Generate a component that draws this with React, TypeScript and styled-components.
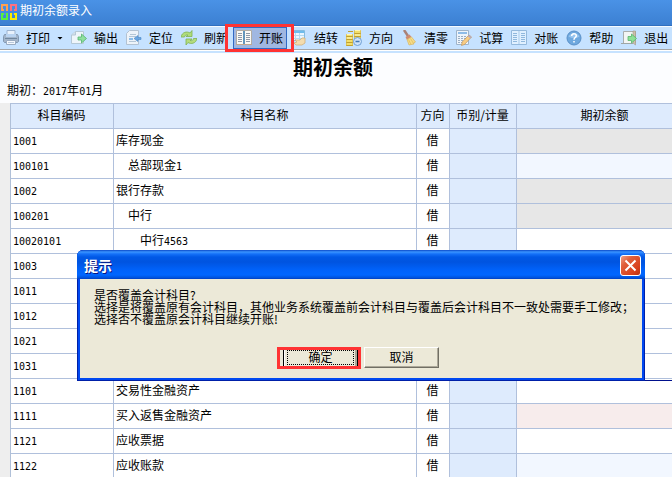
import React from "react";
import styled, { createGlobalStyle } from "styled-components";

const Global = createGlobalStyle`
  *, *::before, *::after { box-sizing: border-box; }
  html, body { margin: 0; height: 100%; overflow: hidden; background: #fcfdff; }
  body, button, table {
    font-family: "Noto Sans CJK SC", "Noto Sans", sans-serif;
    font-size: 12px;
    line-height: 16px;
    color: #000;
  }
`;

const Page = styled.main`
  position: relative;
  overflow: hidden;
  min-height: 100vh;
`;

const TitleBar = styled.header`
  display: flex;
  align-items: flex-start;
  gap: 3px;
  height: 26px;
  padding: 3px 0 0 1px;
  color: #fff;
  background: linear-gradient(#4a92e6, #3c80d2);
  border-bottom: 1px solid #2f6fc0;

  svg { margin-top: 1px; }
`;

const AppName = styled.span`
  line-height: 14px;
`;

const ToolBar = styled.nav`
  display: flex;
  align-items: center;
  height: 24px;
  background: #c6e2ff;
  border-top: 1px solid #f4faff;
  border-bottom: 1px solid #a5a5a5;
`;

const ToolBarEdge = styled.div`
  height: 3px;
  background: #c6e2ff;
  border-top: 1px solid #fff;
`;

const ToolButton = styled.button<{ $active?: boolean }>`
  position: relative;
  display: flex;
  flex: none;
  align-items: center;
  gap: 7px;
  height: 22px;
  margin-right: ${(p) => (p.$active ? 1 : 0)}px;
  padding: 0 ${(p) => (p.$active ? 3 : 4)}px 0 2px;
  border: 1px solid ${(p) => (p.$active ? "#316ac5" : "transparent")};
  background: ${(p) => (p.$active ? "#a0b7e1" : "transparent")};
  white-space: nowrap;
`;

const Arrow = styled.span`
  width: 6px;
  height: 3px;
  background: #000;
  clip-path: polygon(0 0, 100% 0, 50% 100%);
`;

const Highlight = styled.span`
  position: absolute;
  z-index: 1;
  inset: -4px -8px -4px -9px;
  border: 3px solid #ff3333;
  pointer-events: none;
`;

const OkHighlight = styled(Highlight)`
  inset: -1px -4px -2px -7px;
`;

const Heading = styled.h1`
  margin: 0;
  padding: 0 6px 0 0;
  font-size: 20px;
  line-height: 28px;
  text-align: center;
`;

const Period = styled.p`
  margin: 0;
  padding: 1px 7px 5px;
  line-height: 16px;
`;

const Num = styled.span`
  font-family: "DejaVu Sans Mono", monospace;
  font-size: 10px;
  line-height: 12px;
`;

const Sheet = styled.div`
  padding-left: 10px;
  margin-right: -22px;
  background: #eee;
`;

const Grid = styled.table`
  width: 100%;
  table-layout: fixed;
  border-collapse: separate;
  border-spacing: 0;
  border-left: 1px solid #b0c0d8;
  background: #fff;
`;

const Col = styled.col<{ $w?: number }>`
  width: ${(p) => (p.$w ? `${p.$w}px` : "auto")};
`;

const Head = styled.th`
  height: 26px;
  padding: 0 1px 2px 0;
  font-weight: normal;
  background: #deebfd;
  border: 1px solid #b0c0dc;
  border-left: 0;
`;

const Cell = styled.td<{ $level?: number; $center?: boolean; $fill?: string }>`
  height: 25px;
  padding: 0 2px 2px ${(p) => (p.$center ? 1 : 2 + (p.$level ?? 0) * 12)}px;
  text-align: ${(p) => (p.$center ? "center" : "left")};
  background: ${(p) => p.$fill ?? "#fff"};
  border-right: 1px solid #b0c0dc;
  border-bottom: 1px solid #b0c0dc;
  white-space: nowrap;
`;

const FocusLine = styled.div`
  position: absolute;
  top: 380px;
  left: 241px;
  right: 0;
  height: 1px;
  background: #00108c;
`;

const Dialog = styled.section`
  position: absolute;
  top: 250px;
  left: 77px;
  width: 568px;
  padding-bottom: 3px;
  overflow: hidden;
  border-radius: 6px 6px 0 0;
  background: #0048f0;
  box-shadow: inset 0 0 0 1px #0020a8;
`;

const DialogBar = styled.div`
  display: flex;
  align-items: center;
  justify-content: space-between;
  height: 29px;
  padding: 2px 4px 0 7px;
  background: linear-gradient(
    #0a48c8 0, #3a94ff 2px, #1470f8 4px, #0058e6 7px, #0054e0 12px,
    #0062fa 20px, #0066ff 25px, #0050d8 28px, #003cc0 29px
  );
`;

const DialogTitle = styled.h2`
  margin: 0;
  padding-bottom: 2px;
  color: #fff;
  font-size: 14px;
  line-height: 20px;
  text-shadow: 1px 1px #0a1883;
`;

const CloseButton = styled.button`
  display: flex;
  align-items: center;
  justify-content: center;
  width: 21px;
  height: 21px;
  padding: 0;
  border: 1px solid #fff;
  border-radius: 3px;
  background: linear-gradient(135deg, #f0a088 0, #e0603c 30%, #d8401c 75%, #b83010);
`;

const DialogBody = styled.div`
  margin: 0 3px;
  padding: 10px 4px 10px 14px;
  background: #ece9d8;
`;

const Message = styled.p`
  margin: 0;
  line-height: 12px;
  white-space: nowrap;
`;

const Actions = styled.div`
  display: flex;
  gap: 6px;
  padding: 22px 0 0 189px;
`;

const PushButton = styled.button<{ $default?: boolean }>`
  position: relative;
  width: 75px;
  height: 21px;
  padding: 0 0 2px;
  line-height: 16px;
  background: #ece9d8;
  border: 1px solid;
  border-color: #fff #716f64 #716f64 #fff;
  box-shadow: inset -1px -1px #aca899;
  ${(p) =>
    p.$default &&
    `
      border-left-color: #000;
      border-right-color: #000;
      box-shadow: inset 1px 0 #fff, inset -2px -1px #aca899;
      &::before {
        content: "";
        position: absolute;
        inset: 2px 3px;
        border: 1px dotted #000;
      }
    `}
`;

const Svg = ({ children }: { children: React.ReactNode }) => (
  <svg width="16" height="16" viewBox="0 0 16 16" fill="none" aria-hidden="true">
    {children}
  </svg>
);

const LogoIcon = () => (
  <Svg>
    <g strokeWidth="2">
      <path d="M1 1h5v5H1z" stroke="#ffa050" />
      <path d="M10 1h5v5h-5z" stroke="#ff7080" />
      <path d="M1 10h5v5H1z" stroke="#58f03c" />
      <path d="M10 10h5v5h-5z" stroke="#ffee00" />
    </g>
    <path d="M3 5h2v2H3zM11 5h2v2h-2zM3 9h2v2H3zM11 9h2v2h-2z" fill="#4a8ee0" />
  </Svg>
);

const PrintIcon = () => (
  <Svg>
    <path d="M4 .5h8V6H4z" fill="#e8f1fc" stroke="#9db4d0" />
    <path d="M1.500 4.500h13l1 2v5l-1 1h-13l-1-1v-5z" fill="#a3b5ca" stroke="#8298b2" />
    <path d="M3 4h10v3H3z" fill="#b9d3f0" />
    <path d="M2 8.500h12" stroke="#70879f" />
    <path d="M3.500 10.500h9v4h-9z" fill="#f4f8fd" stroke="#9aacc2" />
    <path d="M5 12.500h6" stroke="#b9c8da" />
  </Svg>
);

const ExportIcon = () => (
  <Svg>
    <path d="M4.500 1.500h8v12H.5V5z" fill="#eef5fa" stroke="#b4c8d6" />
    <path d="M4.500 1.500V5H.5" fill="#d3e0ea" stroke="#b4c8d6" />
    <path d="M7 7h3.500V4L15.500 8.500 10.500 13v-3H7z" fill="#8fe0a0" stroke="#55b56e" strokeWidth=".8" />
  </Svg>
);

const LocateIcon = () => (
  <Svg>
    <path d="M3.500.5h9v14h-12V3.500z" fill="#edf3f9" stroke="#b3c2d2" />
    <path d="M4 4.500h6M3 6.500h7M3 11.500h7" stroke="#b4c6d6" />
    <path d="M3 8h4v2H3z" fill="#8bbce8" />
    <path d="M15 7.500h-3V5.500L8 8.500l4 3v-2h3z" fill="#6aa5e0" stroke="#4a88c8" strokeWidth=".6" />
  </Svg>
);

const RefreshIcon = () => (
  <Svg>
    <path d="M0 7c1-5 6-6 9-4l2-2.500V6.500H5L7 5C5 4.500 4 5.500 3.500 7z" fill="#b0dc7a" stroke="#7fb350" strokeWidth=".8" />
    <path d="M16 8.500c-1 5-6 6-9 4l-2 2.500V9h6L9 10.500c2 .5 3 0 3.500-2z" fill="#b5dc7e" stroke="#7fb350" strokeWidth=".8" />
  </Svg>
);

const BookIcon = ({ faded }: { faded?: boolean }) => (
  <Svg>
    <path d="M.5.5h15v14H.5z" fill={faded ? "#e0f0ff" : "#fbfaf6"} stroke={faded ? "#94b9dc" : "#b0aca4"} />
    {!faded && <path d="M0 14.500h16" stroke="#c0a890" />}
    <path d="M8 1v13" stroke={faded ? "#a9cbea" : "#2f74a8"} strokeWidth={faded ? 1 : 1.500} />
    <path
      d="M2 3.500h4M2 5.500h4M2 7.500h4M2 9.500h4M2 11.500h4M10 3.500h4M10 5.500h4M10 7.500h4M10 9.500h4M10 11.500h4"
      stroke={faded ? "#90b8dd" : "#8c98a8"}
    />
  </Svg>
);

const CarryIcon = () => (
  <Svg>
    <path d="M.5.500h13v10H.5z" fill="#eaf6ff" stroke="#84bce0" />
    <path d="M1 1h12v2H1z" fill="#6ebcec" />
    <path d="M1 5.500h12M1 8.500h12M4.500 3v7M8.500 3v7" stroke="#b4daf0" />
    <path d="M4 10h5l2-2h3v5l-3 2H5l-2-2 3-1z" fill="#f3dcae" stroke="#d0b078" strokeWidth=".8" />
  </Svg>
);

const CoinsIcon = () => (
  <Svg>
    <path d="M0 4h7v12H0zM8 0h7v10H8z" fill="#f2df6c" />
    <path d="M0 6.500h7M0 9.500h7M0 12.500h7M0 15.500h7M8 3.500h7M8 6.500h7M8 9.500h7M2 1.500h5" stroke="#c0a030" />
    <path d="M0 4.500h7M0 8h7M8 .500h7M8 5h7" stroke="#fff6b4" />
    <path d="M.5 4v12M6.500 4v12M8.500 0v10M14.500 0v10" stroke="#ceb044" strokeWidth=".6" />
    <circle cx="11.500" cy="11.500" r="4" fill="#cfe4fa" stroke="#6f9fd4" />
    <path d="M9.500 11.500h4" stroke="#3f76b5" strokeWidth="1.500" />
  </Svg>
);

const BroomIcon = () => (
  <Svg>
    <path d="M3 0l4 6" stroke="#a98278" strokeWidth="2.500" />
    <path d="M4.500 7l4-2.500L10.500 7 6 10z" fill="#d08a70" />
    <path d="M6 9.500L10.500 7l4 5-2 1 .5 1-3 .5-2 .5z" fill="#f6dc88" stroke="#d8b660" strokeWidth=".7" />
    <path d="M7.500 9.500l2.500 5M9.500 8.500l3 5" stroke="#dcba60" strokeWidth=".7" />
  </Svg>
);

const TrialIcon = () => (
  <Svg>
    <path d="M.5.5h12v14H.5z" fill="#eef4fb" stroke="#9fb4ca" />
    <path d="M2 2h9v2H2z" fill="#8ebce8" />
    <path d="M2 6.500h9M2 8.500h9M2 10.500h6M2 12.500h4" stroke="#9bafc4" strokeDasharray="2 1" />
    <path d="M13 5l2.500 2-7 7.500-3 1 .7-3.500z" fill="#f8cd84" stroke="#c09458" strokeWidth=".7" />
    <path d="M13 5l2.500 2-1.200 1.300-2.500-2z" fill="#b4a8c4" />
  </Svg>
);

const HelpIcon = () => (
  <Svg>
    <circle cx="8" cy="8" r="7" fill="#6fa8de" stroke="#5a90c8" />
    <path d="M2.500 6.500a6 5 0 0 1 11 0C10 8.500 6 8.500 2.500 6.500z" fill="#9ac6ef" />
    <path d="M5.700 6c0-3.200 4.600-3 4.600-.3C10.300 7.500 8 7.600 8 9.700M8 11v1.500" stroke="#fff" strokeWidth="1.500" />
  </Svg>
);

const ExitIcon = () => (
  <Svg>
    <path d="M2.500 13V1.500h12V13" fill="#f3f5f4" stroke="#a9adad" />
    <path d="M12 1h2.500v14L12 13z" fill="#cdc0ac" stroke="#a19887" strokeWidth=".6" />
    <path d="M0 13.500h12" stroke="#9fa6a6" />
    <path d="M7 6.500h3.500V4l5 4.500-5 4.500v-2.500H7z" fill="#8ee097" stroke="#58b56c" strokeWidth=".8" />
  </Svg>
);

const tools: { label: string; icon: React.ReactNode; active?: boolean; menu?: boolean }[] = [
  { label: "打印", icon: <PrintIcon />, menu: true },
  { label: "输出", icon: <ExportIcon /> },
  { label: "定位", icon: <LocateIcon /> },
  { label: "刷新", icon: <RefreshIcon /> },
  { label: "开账", icon: <BookIcon />, active: true },
  { label: "结转", icon: <CarryIcon /> },
  { label: "方向", icon: <CoinsIcon /> },
  { label: "清零", icon: <BroomIcon /> },
  { label: "试算", icon: <TrialIcon /> },
  { label: "对账", icon: <BookIcon faded /> },
  { label: "帮助", icon: <HelpIcon /> },
  { label: "退出", icon: <ExitIcon /> },
];

const GREY = "#e7e7e7";
const PALE = "#f2f7ff";
const PINK = "#f7ecec";
const BLUE = "#deebfd";

const accounts: { code: string; name?: string; level?: number; fill?: string }[] = [
  { code: "1001", name: "库存现金", fill: GREY },
  { code: "100101", name: "总部现金1", level: 1, fill: PALE },
  { code: "1002", name: "银行存款", fill: GREY },
  { code: "100201", name: "中行", level: 1, fill: GREY },
  { code: "10020101", name: "中行4563", level: 2 },
  { code: "1003" },
  { code: "1011" },
  { code: "1012" },
  { code: "1021" },
  { code: "1031" },
  { code: "1101", name: "交易性金融资产" },
  { code: "1111", name: "买入返售金融资产", fill: PINK },
  { code: "1121", name: "应收票据" },
  { code: "1122", name: "应收账款", fill: PALE },
];

const Mixed = ({ text }: { text: string }) => (
  <>
    {text.split(/(\d+)/).map((part, i) => (i % 2 ? <Num key={i}>{part}</Num> : part))}
  </>
);

export default function App() {
  return (
    <Page>
      <Global />
      <TitleBar>
        <LogoIcon />
        <AppName>期初余额录入</AppName>
      </TitleBar>
      <ToolBar>
        {tools.map((t) => (
          <ToolButton key={t.label} type="button" $active={t.active}>
            {t.icon}
            {t.label}
            {t.menu && <Arrow />}
            {t.active && <Highlight />}
          </ToolButton>
        ))}
      </ToolBar>
      <ToolBarEdge />

      <Heading>期初余额</Heading>
      <Period>
        <Mixed text="期初：2017年01月" />
      </Period>

      <Sheet>
        <Grid>
          <colgroup>
            <Col $w={103} />
            <Col $w={303} />
            <Col $w={33} />
            <Col $w={67} />
            <Col />
          </colgroup>
          <thead>
            <tr>
              <Head scope="col">科目编码</Head>
              <Head scope="col">科目名称</Head>
              <Head scope="col">方向</Head>
              <Head scope="col">币别/计量</Head>
              <Head scope="col">期初余额</Head>
            </tr>
          </thead>
          <tbody>
            {accounts.map((a) => (
              <tr key={a.code}>
                <Cell>
                  <Num>{a.code}</Num>
                </Cell>
                <Cell $level={a.level}>{a.name && <Mixed text={a.name} />}</Cell>
                <Cell $center>{a.name && "借"}</Cell>
                <Cell $fill={BLUE} />
                <Cell $fill={a.fill} />
              </tr>
            ))}
          </tbody>
        </Grid>
      </Sheet>

      <FocusLine />
      <Dialog role="dialog" aria-labelledby="dialog-title">
        <DialogBar>
          <DialogTitle id="dialog-title">提示</DialogTitle>
          <CloseButton type="button" aria-label="关闭">
            <svg width="13" height="13" viewBox="0 0 13 13" aria-hidden="true">
              <path d="M1.500 1.500l10 10M11.500 1.500l-10 10" stroke="#fff" strokeWidth="2" />
            </svg>
          </CloseButton>
        </DialogBar>
        <DialogBody>
          <Message>
            是否覆盖会计科目?
            <br />
            选择是将覆盖原有会计科目，其他业务系统覆盖前会计科目与覆盖后会计科目不一致处需要手工修改；
            <br />
            选择否不覆盖原会计科目继续开账!
          </Message>
          <Actions>
            <PushButton type="button" $default>
              确定
              <OkHighlight />
            </PushButton>
            <PushButton type="button">取消</PushButton>
          </Actions>
        </DialogBody>
      </Dialog>
    </Page>
  );
}
